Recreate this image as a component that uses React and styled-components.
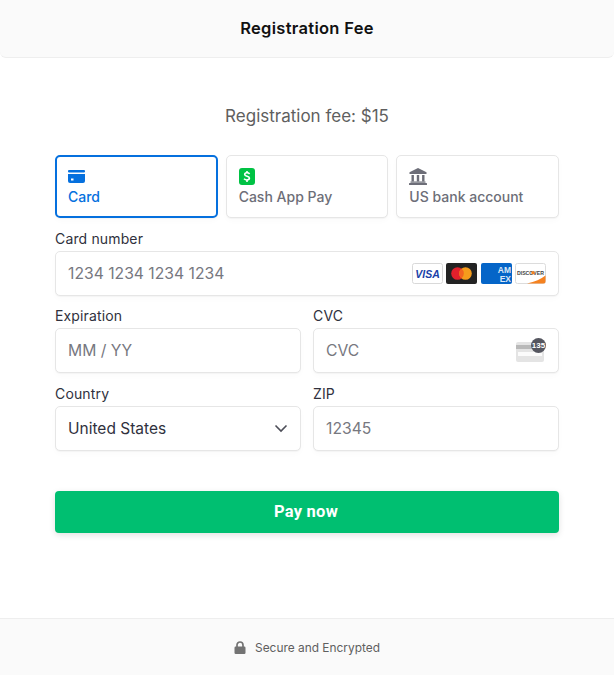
import React from "react";
import styled, { createGlobalStyle } from "styled-components";

const Global = createGlobalStyle`
  html, body { margin: 0; padding: 0; background: #fff; }
  body { font-family: Inter, "Liberation Sans", sans-serif; -webkit-font-smoothing: antialiased; }
  * { box-sizing: border-box; }
`;

const Page = styled.div`
  width: 614px;
  height: 675px;
  display: flex;
  flex-direction: column;
  overflow: hidden;
`;
const Header = styled.header`
  height: 58px;
  flex: none;
  display: flex;
  align-items: center;
  justify-content: center;
  padding-bottom: 2px;
  background: #fafafa;
  border-bottom: 1px solid #eeeeee;
  border-radius: 0 0 6px 6px;
  font-size: 16.5px;
  font-weight: 600;
  color: #111;
  letter-spacing: 0.3px;
`;
const Main = styled.main`
  flex: 1;
  padding: 0 55px;
  display: flex;
  flex-direction: column;
`;
const Fee = styled.div`
  margin-top: 48px;
  height: 20px;
  line-height: 20px;
  text-align: center;
  font-size: 17px;
  color: #5f5f5f;
`;
const Tabs = styled.div`
  margin-top: 29px;
  display: grid;
  grid-template-columns: repeat(3, minmax(0, 1fr));
  gap: 8px;
`;
const Tab = styled.div`
  height: 63px;
  border-radius: 5px;
  background: #fff;
  border: ${p => (p.$active ? "2px solid #0570de" : "1px solid #e6e6e6")};
  padding: ${p => (p.$active ? "11px 11px 0" : "12px 12px 0")};
  box-shadow: 0 1px 1px rgba(0, 0, 0, 0.03), 0 3px 6px rgba(0, 0, 0, 0.02);
  color: ${p => (p.$active ? "#0570de" : "#6d6e78")};
  font-size: 14px;
  font-weight: 500;
  line-height: 17px;
  svg { display: block; margin-bottom: 3px; }
`;
const Row = styled.div`
  display: grid;
  grid-template-columns: ${p => (p.$double ? "repeat(2, minmax(0, 1fr))" : "minmax(0, 1fr)")};
  column-gap: 12px;
  margin-top: ${p => p.$top || 0}px;
`;
const Field = styled.div`
  display: flex;
  flex-direction: column;
  min-width: 0;
`;
const Label = styled.label`
  height: 17px;
  line-height: 17px;
  margin-bottom: 4px;
  font-size: 14px;
  letter-spacing: 0.15px;
  color: #30313d;
`;
const InputBox = styled.div`
  height: 44.5px;
  padding: 0 12px;
  display: flex;
  align-items: center;
  justify-content: space-between;
  background: #fff;
  border: 1px solid #e6e6e6;
  border-radius: 5px;
  box-shadow: 0 1px 1px rgba(0, 0, 0, 0.03), 0 3px 6px rgba(0, 0, 0, 0.02);
`;
const Input = styled.input`
  flex: 1;
  min-width: 0;
  border: 0;
  outline: 0;
  padding: 0;
  background: transparent;
  font: 400 15.7px Inter, "Liberation Sans", sans-serif;
  color: #30313d;
  &::placeholder { color: #77787f; opacity: 1; }
`;
const SelectText = styled.span`
  font-size: 15.5px;
  color: #30313d;
`;
const Logos = styled.div`
  display: flex;
  gap: 3.4px;
`;
const PayButton = styled.button`
  margin-top: 40.5px;
  height: 42px;
  width: 100%;
  border: 0;
  padding: 0 2px 2px 0;
  border-radius: 4px;
  background: #00bf71;
  color: #fff;
  font: 700 16.5px Roboto, "Liberation Sans", sans-serif;
  letter-spacing: 0.25px;
  box-shadow: 0 2px 6px rgba(0, 0, 0, 0.12);
`;
const Footer = styled.footer`
  height: 57px;
  flex: none;
  display: flex;
  align-items: center;
  justify-content: center;
  gap: 9px;
  background: #fafafa;
  border-top: 1px solid #eeeeee;
  font-size: 11.9px;
  color: #5f5f5f;
`;

const CardIcon = () => (
  <svg width="17" height="17" viewBox="0 0 17 17">
    <rect x="0" y="2" width="17" height="2.4" rx="1" fill="#0570de" />
    <path d="M0 6h17v7a2 2 0 0 1-2 2H2a2 2 0 0 1-2-2z" fill="#0570de" />
    <rect x="3" y="10.5" width="2.5" height="2" fill="#fff" />
  </svg>
);
const CashIcon = () => (
  <svg width="16" height="17" viewBox="0 0 16 17">
    <rect width="16" height="17" rx="3" fill="#00c244" />
    <path d="M10.6 5.9C9.9 5 8.9 4.7 7.8 4.8c-1.3.1-2.1.8-2.1 1.8 0 2.2 4.7 1.3 4.7 3.5 0 1.1-1 1.9-2.4 1.9-1.2 0-2.2-.4-3-1.2" fill="none" stroke="#fff" strokeWidth="1.6" />
    <path d="M8 3v2M8 12v2" stroke="#fff" strokeWidth="1.6" />
  </svg>
);
const BankIcon = () => (
  <svg width="18" height="17" viewBox="0 0 18 17" fill="#6d6e78">
    <path d="M9 0l8.5 4.2V6H.5V4.2z" />
    <path d="M2.5 7h2.4v6.5H2.5zM7.8 7h2.4v6.5H7.8zM13.1 7h2.4v6.5h-2.4z" />
    <rect x="1.5" y="13.5" width="15" height="1.2" />
    <rect x="0" y="15" width="18" height="2" rx=".5" />
  </svg>
);
const Visa = () => (
  <svg width="31" height="21" viewBox="0 0 31 21">
    <rect x=".5" y=".5" width="30" height="20" rx="2" fill="#fff" stroke="#d9d9d9" />
    <text x="15.5" y="14.5" textAnchor="middle" fontFamily="Liberation Sans" fontStyle="italic" fontWeight="700" fontSize="10.5" fill="#1a3fa8">VISA</text>
  </svg>
);
const Master = () => (
  <svg width="31" height="21" viewBox="0 0 31 21">
    <rect width="31" height="21" rx="2" fill="#232323" />
    <circle cx="11.5" cy="10.5" r="6.3" fill="#e2202c" />
    <circle cx="19.5" cy="10.5" r="6.3" fill="#f59c1c" />
    <path d="M15.5 5.6a6.3 6.3 0 0 1 0 9.8a6.3 6.3 0 0 1 0-9.8z" fill="#f2641f" />
  </svg>
);
const Amex = () => (
  <svg width="31" height="21" viewBox="0 0 31 21">
    <rect width="31" height="21" rx="2" fill="#0565c8" />
    <text x="30" y="9.5" textAnchor="end" fontFamily="Liberation Sans" fontWeight="700" fontSize="8.5" fill="#fff" opacity=".85">AM</text>
    <text x="30" y="18.5" textAnchor="end" fontFamily="Liberation Sans" fontWeight="700" fontSize="8.5" fill="#fff" opacity=".85">EX</text>
  </svg>
);
const Discover = () => (
  <svg width="31" height="21" viewBox="0 0 31 21">
    <rect x=".5" y=".5" width="30" height="20" rx="2" fill="#fff" stroke="#dcdcdc" />
    <path d="M12 20.5c8-1.5 14-4.5 18.5-8v6a2 2 0 0 1-2 2z" fill="#f58220" />
    <text x="15.5" y="11.5" textAnchor="middle" fontFamily="Liberation Sans" fontWeight="700" fontSize="5.2" fill="#444">DISCOVER</text>
    <circle cx="18" cy="9.8" r="1.7" fill="#f58220" />
  </svg>
);
const CvcIcon = () => (
  <svg width="32" height="24" viewBox="0 0 32 24">
    <rect x="2" y="4" width="28" height="20" rx="2" fill="#e4e4e4" />
    <rect x="2" y="7" width="28" height="4" fill="#b9b9b9" />
    <rect x="4" y="14" width="24" height="4" fill="#fbfbfb" />
    <circle cx="24.5" cy="7.5" r="7.5" fill="#55565f" />
    <text x="24.5" y="10.3" textAnchor="middle" fontFamily="Liberation Sans" fontWeight="700" fontSize="8" fill="#fff">135</text>
  </svg>
);
const Chevron = () => (
  <svg width="14" height="9" viewBox="0 0 14 9" fill="none" stroke="#4d4e58" strokeWidth="1.6">
    <path d="M1.5 1.5L7 7l5.500-5.500" />
  </svg>
);
const Lock = () => (
  <svg width="12" height="13" viewBox="0 0 12 13" fill="#737373">
    <path d="M3 6V4a3 3 0 0 1 6 0v2" fill="none" stroke="#737373" strokeWidth="1.7" />
    <rect x="0.5" y="5.5" width="11" height="7.5" rx="1.2" />
  </svg>
);

export default function App() {
  return (
    <Page>
      <Global />
      <Header>Registration Fee</Header>
      <Main>
        <Fee>Registration fee: $15</Fee>
        <Tabs>
          <Tab $active><CardIcon />Card</Tab>
          <Tab><CashIcon />Cash App Pay</Tab>
          <Tab><BankIcon />US bank account</Tab>
        </Tabs>
        <Row $top={12}>
          <Field>
            <Label>Card number</Label>
            <InputBox>
              <Input placeholder="1234 1234 1234 1234" />
              <Logos><Visa /><Master /><Amex /><Discover /></Logos>
            </InputBox>
          </Field>
        </Row>
        <Row $double $top={11.5}>
          <Field>
            <Label>Expiration</Label>
            <InputBox><Input placeholder="MM / YY" /></InputBox>
          </Field>
          <Field>
            <Label>CVC</Label>
            <InputBox><Input placeholder="CVC" /><CvcIcon /></InputBox>
          </Field>
        </Row>
        <Row $double $top={12.5}>
          <Field>
            <Label>Country</Label>
            <InputBox><SelectText>United States</SelectText><Chevron /></InputBox>
          </Field>
          <Field>
            <Label>ZIP</Label>
            <InputBox><Input placeholder="12345" /></InputBox>
          </Field>
        </Row>
        <PayButton>Pay now</PayButton>
      </Main>
      <Footer><Lock />Secure and Encrypted</Footer>
    </Page>
  );
}
